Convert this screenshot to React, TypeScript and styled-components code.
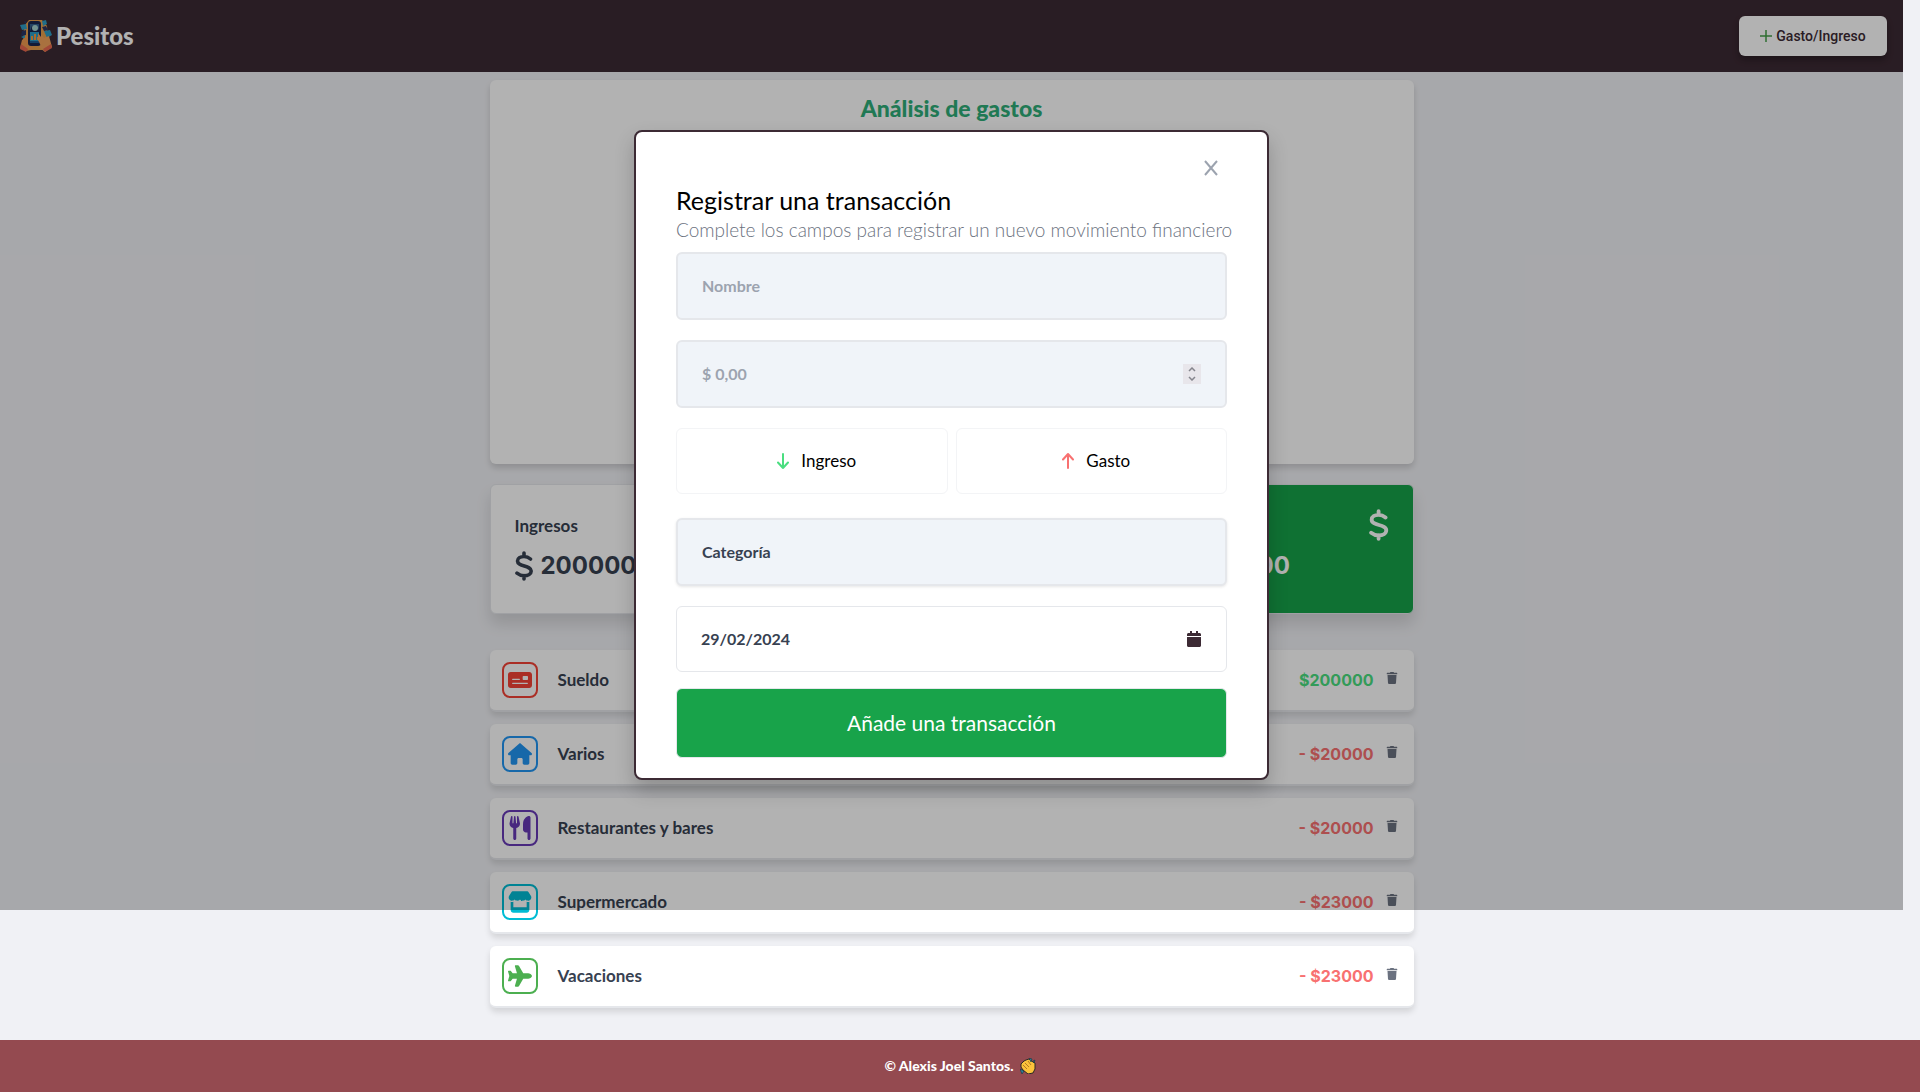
import React from 'react';
import styled, { createGlobalStyle } from 'styled-components';
import { FaTrash, FaCalendar } from 'react-icons/fa';
import { FaHouse, FaStore, FaUtensils, FaPlane, FaMoneyCheck } from 'react-icons/fa6';

const GlobalStyle = createGlobalStyle`
  *, *::before, *::after { box-sizing: border-box; }
  body {
    margin: 0;
    background: #f0f1f5;
    color: #374151;
    font-family: Lato, "Noto Sans", sans-serif;
    font-size: 16px;
    line-height: 24px;
  }
  h1, h2, p { margin: 0; }
  button, input, select { font: inherit; color: inherit; }
  button { cursor: pointer; }
`;

const Page = styled.div`
  position: relative;
  min-height: 100vh;
  display: flex;
  flex-direction: column;
`;

const Shell = styled.div`
  margin-right: 17px;
`;

const Header = styled.header`
  display: flex;
  align-items: center;
  justify-content: space-between;
  height: 72px;
  padding: 0 16px 0 20px;
  background: #3c2a34;
`;

const Brand = styled.a`
  display: flex;
  align-items: center;
  gap: 4px;
  color: #fff;
  font-size: 24px;
  font-weight: 900;
  line-height: 32px;
  text-decoration: none;
`;

const AddButton = styled.button`
  display: flex;
  align-items: center;
  justify-content: center;
  gap: 4px;
  width: 148px;
  height: 40px;
  padding: 0;
  border: 0;
  border-radius: 6px;
  background: #fff;
  color: #3c2a34;
  font-family: Roboto, sans-serif;
  font-size: 14px;
  font-weight: 500;
  box-shadow: 0 4px 6px rgba(0, 0, 0, 0.3);
`;

const Main = styled.main`
  width: 924px;
  max-width: 100%;
  margin: 8px auto 32px;
`;

const ChartCard = styled.section`
  height: 384px;
  padding-top: 12px;
  border-radius: 6px;
  background: #fff;
  text-align: center;
  box-shadow: 0 4px 6px rgba(0, 0, 0, 0.15);
`;

const ChartTitle = styled.h2`
  color: #2fae79;
  font-size: 23px;
  font-weight: 900;
  line-height: 32px;
`;

const Summary = styled.div`
  display: grid;
  grid-template-columns: repeat(3, 260px);
  justify-content: space-between;
  margin: 20px 0 36px;
`;

const Tile = styled.section<{ $total?: boolean }>`
  display: flex;
  justify-content: space-between;
  height: 130px;
  padding: 24px;
  border: 1px solid #e5e7eb;
  border-radius: 6px;
  background: ${(p) => (p.$total ? '#16a34a' : '#fff')};
  color: ${(p) => (p.$total ? '#fff' : '#374151')};
  box-shadow: 0 10px 15px rgba(0, 0, 0, 0.12);
`;

const TileLabel = styled.p`
  margin: 5px 0 12px;
  font-size: 17px;
  font-weight: 700;
`;

const TileAmount = styled.p`
  display: flex;
  align-items: center;
  gap: 8px;
  font-family: Inter, sans-serif;
  font-size: 24px;
  font-weight: 700;
  line-height: 32px;
`;

const List = styled.ul`
  display: grid;
  gap: 12px;
  margin: 0;
  padding: 0;
  list-style: none;
`;

const Row = styled.li`
  display: flex;
  align-items: center;
  height: 62px;
  padding: 0 16px 0 12px;
  border-bottom: 2px solid #e5e7eb;
  border-radius: 6px;
  background: #fff;
  box-shadow: 0 4px 6px rgba(0, 0, 0, 0.12);
`;

const CategoryIcon = styled.span<{ $color: string }>`
  display: grid;
  place-items: center;
  width: 36px;
  height: 36px;
  border: 2px solid ${(p) => p.$color};
  border-radius: 8px;
  color: ${(p) => p.$color};
  font-size: 24px;
`;

const RowName = styled.span`
  flex: 1;
  margin-left: 20px;
  font-size: 17px;
  font-weight: 700;
`;

const Amount = styled.span<{ $income?: boolean }>`
  color: ${(p) => (p.$income ? '#4ade80' : '#f87171')};
  font-family: Inter, sans-serif;
  font-weight: 700;
`;

const DeleteButton = styled.button`
  display: flex;
  margin: 0 0 4px 12px;
  padding: 0;
  border: 0;
  background: none;
  color: #6b7280;
  font-size: 12px;
`;

const Footer = styled.footer`
  display: flex;
  flex: 1;
  align-items: center;
  justify-content: center;
  gap: 6px;
  min-height: 52px;
  background: #944a50;
  color: #fff;
  font-size: 14px;
  font-weight: 900;
`;

const Overlay = styled.div`
  position: absolute;
  top: 0;
  left: 0;
  right: 17px;
  height: 910px;
  display: flex;
  align-items: center;
  justify-content: center;
  background: rgba(0, 0, 0, 0.3);
`;

const Dialog = styled.div`
  width: 635px;
  padding: 24px 40px 20px;
  border: 2px solid #3c2a34;
  border-radius: 8px;
  background: #fff;
  box-shadow: 0 10px 20px rgba(0, 0, 0, 0.2);
`;

const CloseRow = styled.div`
  display: flex;
  justify-content: flex-end;
  height: 28px;
  padding-right: 9px;
`;

const CloseButton = styled.button`
  display: flex;
  padding: 4px 0 0;
  border: 0;
  background: none;
`;

const DialogTitle = styled.h1`
  color: #000;
  font-size: 25px;
  font-weight: 400;
  line-height: 32px;
`;

const DialogText = styled.p`
  margin-bottom: 8px;
  color: #6b7280;
  font-size: 19px;
  font-weight: 300;
  line-height: 28px;
  white-space: nowrap;
`;

const Form = styled.form`
  display: flex;
  flex-direction: column;
`;

const Field = styled.label<{ $plain?: boolean; $raised?: boolean }>`
  display: flex;
  align-items: center;
  height: ${(p) => (p.$plain ? 66 : 68)}px;
  margin-bottom: ${(p) => (p.$plain ? 16 : 20)}px;
  padding: 0 24px;
  border: ${(p) => (p.$plain ? 1 : 2)}px solid #e5e7eb;
  border-radius: 6px;
  background: ${(p) => (p.$plain ? '#fff' : '#f0f4f9')};
  color: #374151;
  box-shadow: ${(p) => (p.$raised ? '0 1px 3px rgba(0, 0, 0, 0.1)' : 'none')};
`;

const fieldText = `
  flex: 1;
  min-width: 0;
  padding: 0;
  border: 0;
  outline: 0;
  background: none;
  font-weight: 700;
`;

const TextInput = styled.input`
  ${fieldText}
  &::placeholder { color: #9ca3af; opacity: 1; }
`;

const CategorySelect = styled.select`
  ${fieldText}
  appearance: none;
`;

const Stepper = styled.button`
  display: grid;
  place-items: center;
  width: 18px;
  height: 20px;
  padding: 0;
  border: 0;
  background: #e8e6eb;
`;

const TypeRow = styled.div`
  display: grid;
  grid-template-columns: 1fr 1fr;
  gap: 8px;
  margin-bottom: 24px;
`;

const TypeButton = styled.button`
  display: flex;
  align-items: center;
  justify-content: center;
  gap: 12px;
  height: 66px;
  padding: 0 0 0 10px;
  border: 1px solid #f3f4f6;
  border-radius: 6px;
  background: #fff;
  color: #000;
  font-size: 17px;
`;

const Submit = styled.button`
  height: 70px;
  border: 1px solid #e5e7eb;
  border-radius: 6px;
  background: #18a34a;
  color: #fff;
  font-size: 21px;
`;

const Logo = () => (
  <svg width="32" height="32" viewBox="0 0 32 32" aria-hidden="true">
    <path d="M9 0h13l5 6 1 20-6 4H10l-7-5 1-19z" fill="#e8a04b" />
    <path d="M0 5l6-1 1 5-5 1zM22 1l4-1 1 4-4 2zM24 11l6-1 2 5-5 3zM1 17l4-2v4z" fill="#2f9cc4" />
    <path d="M2 11l4-1v5l-5 1zM22 7l4-1 2 4-4 1zM28 19l3 2-3 2zM4 1l3 1-2 2z" fill="#2a3463" />
    <path d="M8 15v9l5 3-2 3-5 1-6-3 2-8z" fill="#f09a50" />
    <path d="M19 12l5 6 5-2 3 11-7 5-5-4-2-4z" fill="#f3a35b" />
    <path d="M1 24l7 5-2 3-6-3zM31 24l-8 5 2 3 7-4z" fill="#e8674f" />
    <rect x="8" y="1" width="13" height="25" rx="3" fill="#1a2750" />
    <path d="M10 4h9v6l-2-4h-5l-2 5z" fill="#33608f" />
    <circle cx="15" cy="8" r="3" fill="#a7d4d0" />
    <path d="M10 12h9v11h-9z" fill="#2c9cc6" />
    <path d="M11 20v-4h2v4zm3 0v-6h2v6zm3 0v-3h1v3z" fill="#f19a3f" />
    <path d="M10 21h9v2h-9z" fill="#1f5d92" />
    <path d="M18 13l6 8-3 5-3-6z" fill="#f3a35b" />
  </svg>
);

const Plus = () => (
  <svg width="12" height="12" viewBox="0 0 12 12" stroke="#43a047" strokeWidth="1.5" aria-hidden="true">
    <path d="M6 0v12M0 6h12" />
  </svg>
);

const Dollar = ({ height }: { height: number }) => (
  <svg height={height} viewBox="0 0 18 30" fill="none" stroke="currentColor" strokeWidth="3.6" strokeLinecap="round" strokeLinejoin="round" aria-hidden="true">
    <path d="M9 2v3.500M9 24.500v3.500M15.500 8c-2-1.700-4.500-2.500-6.500-2.500-3.700 0-6.500 1.700-6.500 4.500 0 6 13.700 4 13.700 10 0 3-3.200 4.800-7.200 4.800-2.500 0-5-1-7-2.600" />
  </svg>
);

const Arrow = ({ up }: { up?: boolean }) => (
  <svg width="12" height="16" viewBox="0 0 12 16" fill="none" stroke={up ? '#f87171' : '#4ade80'} strokeWidth="2" strokeLinecap="round" strokeLinejoin="round" aria-hidden="true">
    <path d={up ? 'M6 15V1M1 6.500l5-5.500 5 5.500' : 'M6 1v14M1 9.500l5 5.500 5-5.500'} />
  </svg>
);

const Close = () => (
  <svg width="14" height="16" viewBox="0 0 14 16" stroke="#9ca3af" strokeWidth="2" aria-hidden="true">
    <path d="M1 1l12 14M13 1L1 15" />
  </svg>
);

const Chevrons = () => (
  <svg width="8" height="14" viewBox="0 0 8 14" fill="none" stroke="#85858d" strokeWidth="1.5" aria-hidden="true">
    <path d="M1 4l3-3 3 3M1 10l3 3 3-3" />
  </svg>
);

const Clap = () => (
  <svg width="16" height="16" viewBox="0 0 16 16" aria-hidden="true">
    <path d="M1 6l3-3 2-1 3-1 4 3 2 1v6l-2 4-5 1-5-4-2-3z" fill="#fbc23b" stroke="#2c2a25" />
    <path d="M3 7l4 4M5 5l4 4M8 3l3 4" stroke="#b27a22" fill="none" />
    <path d="M9 0l3 1-1 3zM0 11l4 2-2 3zM13 3l2-1-1 3z" fill="#2b86a0" stroke="#182f3b" strokeWidth=".6" />
  </svg>
);

const movements = [
  { name: 'Sueldo', amount: '$200000', color: '#f44336', Icon: FaMoneyCheck, income: true },
  { name: 'Varios', amount: '- $20000', color: '#2196f3', Icon: FaHouse },
  { name: 'Restaurantes y bares', amount: '- $20000', color: '#673ab7', Icon: FaUtensils },
  { name: 'Supermercado', amount: '- $23000', color: '#00bcd4', Icon: FaStore },
  { name: 'Vacaciones', amount: '- $23000', color: '#4caf50', Icon: FaPlane },
];

export default function App() {
  return (
    <Page>
      <GlobalStyle />
      <Shell>
        <Header>
          <Brand href="#"><Logo />Pesitos</Brand>
          <AddButton type="button"><Plus />Gasto/Ingreso</AddButton>
        </Header>
        <Main>
          <ChartCard><ChartTitle>Análisis de gastos</ChartTitle></ChartCard>
          <Summary>
            <Tile>
              <div>
                <TileLabel>Ingresos</TileLabel>
                <TileAmount><Dollar height={30} />200000</TileAmount>
              </div>
            </Tile>
            <Tile />
            <Tile $total>
              <div>
                <TileLabel>Total</TileLabel>
                <TileAmount><Dollar height={30} />114000</TileAmount>
              </div>
              <Dollar height={32} />
            </Tile>
          </Summary>
          <List>
            {movements.map(({ name, amount, color, Icon, income }) => (
              <Row key={name}>
                <CategoryIcon $color={color}><Icon /></CategoryIcon>
                <RowName>{name}</RowName>
                <Amount $income={income}>{amount}</Amount>
                <DeleteButton type="button" aria-label={`Eliminar ${name}`}><FaTrash /></DeleteButton>
              </Row>
            ))}
          </List>
        </Main>
      </Shell>
      <Footer>© Alexis Joel Santos. <Clap /></Footer>
      <Overlay>
        <Dialog role="dialog" aria-modal="true" aria-labelledby="dialog-title">
          <CloseRow><CloseButton type="button" aria-label="Cerrar"><Close /></CloseButton></CloseRow>
          <DialogTitle id="dialog-title">Registrar una transacción</DialogTitle>
          <DialogText>Complete los campos para registrar un nuevo movimiento financiero</DialogText>
          <Form onSubmit={(e) => e.preventDefault()}>
            <Field><TextInput aria-label="Nombre" placeholder="Nombre" /></Field>
            <Field>
              <TextInput aria-label="Monto" inputMode="decimal" placeholder="$ 0,00" />
              <Stepper type="button" aria-label="Cambiar monto"><Chevrons /></Stepper>
            </Field>
            <TypeRow>
              <TypeButton type="button"><Arrow />Ingreso</TypeButton>
              <TypeButton type="button"><Arrow up />Gasto</TypeButton>
            </TypeRow>
            <Field $raised><CategorySelect aria-label="Categoría"><option>Categoría</option></CategorySelect></Field>
            <Field $plain><TextInput aria-label="Fecha" defaultValue="29/02/2024" /><FaCalendar color="#3c2a34" /></Field>
            <Submit type="submit">Añade una transacción</Submit>
          </Form>
        </Dialog>
      </Overlay>
    </Page>
  );
}
